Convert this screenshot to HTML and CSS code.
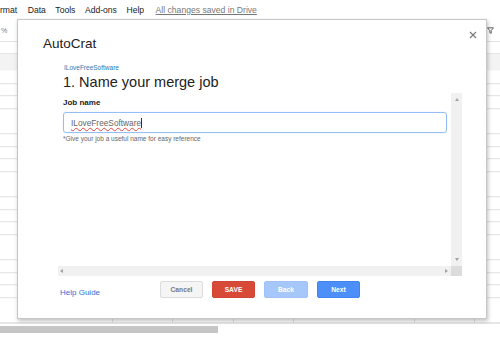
FILE: index.html
```html
<!DOCTYPE html>
<html lang="en">
<head>
    <meta charset="UTF-8">
    <meta name="viewport" content="width=device-width, initial-scale=1.0">
    <title>AutoCrat - Name your merge job</title>
    <link rel="stylesheet" href="styles.css">
</head>
<body>
    <div class="sheet">
        <div class="menubar">
            <span class="menu-item first">rmat</span>
            <span class="menu-item">Data</span>
            <span class="menu-item">Tools</span>
            <span class="menu-item">Add-ons</span>
            <span class="menu-item">Help</span>
            <span class="menu-saved">All changes saved in Drive</span>
        </div>
        <div class="toolbar">
            <span class="tool-pct">%</span>
            <svg class="tool-filter" width="7" height="7" viewBox="0 0 7 7">
                <path d="M0.5 0.8 H6.5 L4.2 3.6 V6.4 L2.8 5.6 V3.6 Z" fill="none" stroke="#666" stroke-width="1"/>
            </svg>
        </div>
        <div class="formula-bar"></div>
        <div class="col-header"></div>
        <div class="grid"></div>
        <div class="sheet-scroll">
            <div class="sheet-thumb"></div>
        </div>
    </div>

    <div class="dialog">
        <h1 class="dialog-title">AutoCrat</h1>
        <button class="dialog-close" aria-label="Close">
            <svg width="8" height="8" viewBox="0 0 8 8">
                <path d="M1 1 L7 7 M7 1 L1 7" stroke="#777" stroke-width="1.1"/>
            </svg>
        </button>

        <div class="frame">
            <div class="brand">ILoveFreeSoftware</div>
            <h2 class="step-title">1. Name your merge job</h2>

            <div class="scroll-box">
                <div class="scroll-main">
                    <label class="field-label">Job name</label>
                    <div class="field-input">
                        <span class="misspelt">ILoveFreeSoftware</span><span class="caret"></span>
                    </div>
                    <div class="field-hint">*Give your job a useful name for easy reference</div>
                </div>
                <div class="vbar">
                    <span class="arrow arrow-up"></span>
                    <span class="arrow arrow-down"></span>
                </div>
                <div class="hbar">
                    <span class="arrow arrow-left"></span>
                    <span class="arrow arrow-right"></span>
                </div>
                <div class="corner"></div>
            </div>
        </div>

        <div class="dialog-footer">
            <a class="help-link">Help Guide</a>
            <div class="btn-row">
                <button class="btn btn-cancel">Cancel</button>
                <button class="btn btn-save">SAVE</button>
                <button class="btn btn-back">Back</button>
                <button class="btn btn-next">Next</button>
            </div>
        </div>
    </div>
</body>
</html>
```

FILE: styles.css
```css
body {
    margin: 0;
    font-family: "Liberation Sans", Arial, sans-serif;
    background-color: #fff;
    overflow: hidden;
}

/* spreadsheet behind the dialog */
.sheet {
    width: 500px;
    height: 337px;
}
.menubar {
    height: 20px;
    display: flex;
    align-items: center;
    gap: 9.5px;
    font-size: 8.6px;
    color: #222;
}
.menu-item.first {
    margin-right: 1px;
}
.menu-saved {
    margin-left: 2px;
    color: #777;
    text-decoration: underline;
}
.toolbar {
    height: 21px;
    border-bottom: 1px solid #e3e3e3;
    display: flex;
    align-items: center;
    justify-content: space-between;
    padding-right: 6px;
}
.tool-pct {
    font-size: 7px;
    color: #5f7fa8;
    padding-left: 1px;
}
.tool-filter {
    display: block;
}
.formula-bar {
    height: 11px;
}
.col-header {
    height: 17px;
    background-color: #f3f3f3;
    border-top: 1px solid #e6e6e6;
    box-sizing: border-box;
}
.grid {
    height: 253px;
    background-image:
        repeating-linear-gradient(to bottom, transparent 0 11.8px, #e0e0e0 11.8px 12.6px),
        repeating-linear-gradient(to right, transparent 0 59.6px, #e0e0e0 59.6px 60.4px);
    background-position: 0 1.2px, -8px 0;
}
.sheet-scroll {
    height: 14px;
    border-top: 1px solid #e6e6e6;
    box-sizing: border-box;
    padding-top: 2px;
}
.sheet-thumb {
    width: 218px;
    height: 7px;
    background-color: #c6c6c6;
}

/* dialog */
.dialog {
    position: absolute;
    left: 17px;
    top: 19px;
    width: 470px;
    height: 300px;
    box-sizing: border-box;
    background-color: #fff;
    border: 1px solid rgba(0,0,0,0.22);
    box-shadow: 1px 2px 4px rgba(0,0,0,0.25);
    padding-top: 16px;
}
.dialog-title {
    margin: 0 0 0 25px;
    font-size: 13.5px;
    line-height: 16px;
    font-weight: normal;
    color: #222;
}
.dialog-close {
    position: absolute;
    top: 11px;
    right: 9px;
    padding: 0;
    border: none;
    background: none;
    width: 8px;
    height: 8px;
}
.dialog-close svg {
    display: block;
}
.frame {
    margin: 0 24px 0 40px;
}
.brand {
    margin: 10.5px 0 0 6px;
    font-size: 6.5px;
    line-height: 9px;
    color: #2a7ab5;
}
.step-title {
    margin: 2px 0 0 5px;
    font-size: 14.5px;
    line-height: 17px;
    font-weight: normal;
    color: #222;
}
.scroll-box {
    margin-top: 2.5px;
    height: 183px;
    display: grid;
    grid-template-columns: 1fr 11px;
    grid-template-rows: 1fr 10px;
}
.scroll-main {
    padding: 5px 4px 0 5px;
}
.field-label {
    display: block;
    font-size: 8px;
    line-height: 10px;
    font-weight: bold;
    color: #222;
    margin-bottom: 4px;
}
.field-input {
    height: 21px;
    box-sizing: border-box;
    border: 1px solid #93bff5;
    border-radius: 3px;
    box-shadow: 0 0 1px rgba(77,144,254,0.4);
    padding-left: 7px;
    display: flex;
    align-items: center;
    font-size: 8.3px;
    color: #666;
}
.misspelt {
    text-decoration: underline wavy #e0453a;
    text-decoration-thickness: 0.8px;
    text-underline-offset: 1px;
}
.caret {
    width: 1px;
    height: 10px;
    background-color: #333;
}
.field-hint {
    margin-top: 1.5px;
    font-size: 6.5px;
    line-height: 8px;
    color: #666;
}
.vbar {
    background-color: #f1f1f1;
    display: flex;
    flex-direction: column;
    justify-content: space-between;
    align-items: center;
    padding: 5px 0;
}
.hbar {
    background-color: #f1f1f1;
    display: flex;
    justify-content: space-between;
    align-items: center;
    padding: 0 3px 0 2px;
}
.corner {
    background-color: #dcdcdc;
}
.arrow {
    width: 0;
    height: 0;
    display: block;
}
.arrow-up {
    border-left: 2.5px solid transparent;
    border-right: 2.5px solid transparent;
    border-bottom: 3px solid #a3a3a3;
}
.arrow-down {
    border-left: 2.5px solid transparent;
    border-right: 2.5px solid transparent;
    border-top: 3px solid #a3a3a3;
}
.arrow-left {
    border-top: 2.5px solid transparent;
    border-bottom: 2.5px solid transparent;
    border-right: 3px solid #a3a3a3;
}
.arrow-right {
    border-top: 2.5px solid transparent;
    border-bottom: 2.5px solid transparent;
    border-left: 3px solid #a3a3a3;
}

/* footer */
.dialog-footer {
    margin-top: 5px;
    padding-left: 42px;
    display: flex;
    align-items: flex-start;
}
.help-link {
    width: 100px;
    margin-top: 7px;
    font-size: 8px;
    line-height: 10px;
    color: #2f6fd6;
    cursor: pointer;
}
.btn-row {
    display: flex;
    gap: 9px;
}
.btn {
    width: 43px;
    height: 17px;
    padding: 0;
    box-sizing: border-box;
    border: 1px solid transparent;
    border-radius: 2px;
    font-family: "Liberation Sans", Arial, sans-serif;
    font-size: 6.7px;
    font-weight: bold;
    color: #fff;
}
.btn-cancel {
    background-color: #f5f5f5;
    border-color: #dcdcdc;
    color: #777;
}
.btn-save {
    background-color: #d84a38;
    border-color: #d04535;
}
.btn-back {
    width: 44px;
    background-color: #a6c7fa;
    border-color: #a0c2f8;
}
.btn-next {
    background-color: #4d8ff9;
    border-color: #3f83f1;
}
```
